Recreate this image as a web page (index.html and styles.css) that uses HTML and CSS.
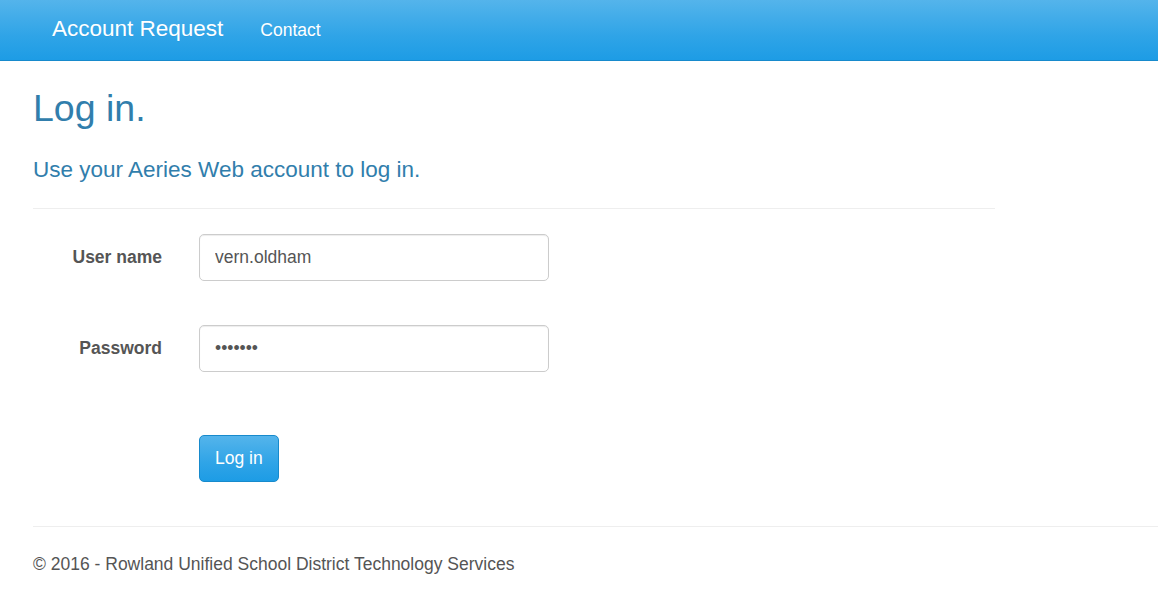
FILE: index.html
```html
<!doctype html>
<html>

<head>
    <meta charset="utf-8">
    <meta name="viewport" content="width=device-width, initial-scale=1">
    <title>Log in - Account Request</title>
    <link rel="stylesheet" href="styles.css">
</head>

<body>
    <div class="navbar">
        <a class="brand" href="#">Account Request</a>
        <ul class="nav">
            <li><a href="#">Contact</a></li>
        </ul>
    </div>
    <div class="body-content">
        <div class="col-main">
            <h2>Log in.</h2>
            <section class="login-form">
                <h4>Use your Aeries Web account to log in.</h4>
                <hr />
                <form class="form-horizontal">
                    <div class="form-group">
                        <label class="control-label" for="UserName">User name</label>
                        <input class="form-control" type="text" id="UserName" value="vern.oldham" />
                    </div>
                    <div class="form-group">
                        <label class="control-label" for="Password">Password</label>
                        <input class="form-control" type="text" id="Password" value="&bull;&bull;&bull;&bull;&bull;&bull;&bull;" />
                    </div>
                    <div class="form-group form-actions">
                        <input type="button" class="btn btn-primary" value="Log in" />
                    </div>
                </form>
            </section>
        </div>
        <hr class="footer-rule" />
        <footer>
            <p>&copy; 2016 - Rowland Unified School District Technology Services</p>
        </footer>
    </div>
</body>

</html>
```

FILE: styles.css
```css
body {
    margin: 0;
    font-family: "Liberation Sans", Arial, Helvetica, sans-serif;
    font-size: 17.5px;
    color: #555555;
    background-color: #ffffff;
}
a {
    text-decoration: none;
}
.navbar {
    display: flex;
    align-items: center;
    height: 60px;
    padding-left: 52px;
    background-image: linear-gradient(#54b4eb, #2fa4e7 60%, #1d9ce5);
    border-bottom: 1px solid #178acc;
}
.brand {
    color: #ffffff;
    font-size: 22.5px;
    line-height: 58px;
    padding-bottom: 2px;
    text-shadow: 0 1px 0 rgba(0, 0, 0, 0.05);
}
.nav {
    display: flex;
    margin: 0 0 0 37px;
    padding: 0;
    list-style: none;
}
.nav a {
    color: #ffffff;
    font-size: 17.5px;
    line-height: 58px;
    padding-bottom: 2px;
    text-shadow: 0 1px 0 rgba(0, 0, 0, 0.05);
}
.body-content {
    padding-left: 33px;
}
.col-main {
    width: 962px;
}
h2 {
    margin: 27px 0 0;
    font-size: 37.5px;
    font-weight: 500;
    line-height: 41px;
    color: #317eac;
}
h4 {
    margin: 28px 0 0;
    font-size: 22.5px;
    font-weight: 500;
    line-height: 25px;
    color: #317eac;
}
hr {
    margin: 26px 0 0;
    border: 0;
    border-top: 1px solid #eeeeee;
}
.form-horizontal {
    padding-top: 25px;
}
.form-group {
    display: flex;
    align-items: center;
    gap: 37px;
    margin-bottom: 44px;
}
.control-label {
    width: 129px;
    text-align: right;
    font-weight: bold;
}
.form-control {
    box-sizing: border-box;
    width: 350px;
    height: 47px;
    margin: 0;
    padding: 0 15px;
    font-family: inherit;
    font-size: 17.5px;
    color: #555555;
    background-color: #ffffff;
    border: 1px solid #cccccc;
    border-radius: 5px;
    box-shadow: inset 0 1px 1px rgba(0, 0, 0, 0.075);
    outline: none;
}
.form-actions {
    padding-top: 19px;
    padding-left: 166px;
    margin-bottom: 0;
}
.btn {
    box-sizing: border-box;
    height: 47px;
    padding: 0 15px;
    font-family: inherit;
    font-size: 17.5px;
    cursor: pointer;
    border-radius: 5px;
}
.btn-primary {
    color: #ffffff;
    background-image: linear-gradient(#54b4eb, #2fa4e7 60%, #1d9ce5);
    border: 1px solid #178acc;
}
.footer-rule {
    margin-top: 44px;
}
footer p {
    margin: 25px 0 0;
    line-height: 25px;
}
```
